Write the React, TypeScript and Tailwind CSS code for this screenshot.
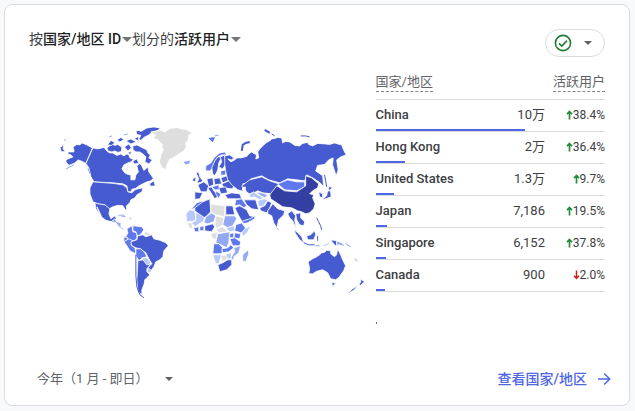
import React from 'react';

type Shape = {
  fill: string;
  d: string;
};

const countries = [
  { name: 'China', users: '10万', change: 38.4, share: 65 },
  { name: 'Hong Kong', users: '2万', change: 36.4, share: 13 },
  { name: 'United States', users: '1.3万', change: 9.7, share: 8 },
  { name: 'Japan', users: '7,186', change: 19.5, share: 5 },
  { name: 'Singapore', users: '6,152', change: 37.8, share: 4.5 },
  { name: 'Canada', users: '900', change: -2.0, share: 4 },
];

const NONE = '#dedede';
const LOW = '#b7c8fb';
const SOFT = '#92a8f2';
const MID = '#5f78ec';
const HIGH = '#465bcf';
const TOP = '#343fa3';

const regions: Shape[] = [
  // North America
  { fill: HIGH, d: 'M73 147L77 144.5L80 145L82 143L87 145L92.5 148L86 163.5L81 161L78 160L75 163L69 165.5L66 162L66 160L69 158.5L73 157L71 155L68 154L68 152L74 152L74 150Z' },
  { fill: HIGH, d: 'M60 147.5L64 145L63 149L65.500 151L61.500 152Z' },
  { fill: HIGH, d: 'M93 148L98 149L104 147.5L106 150L108 152L110 153L113 153L117 155.5L121 154L124 156L127 154L129 155L130 158L133.500 159.500L131 162L128 163L124 165L122 169L125 173L128 174.500L131 175L131 180L135 180L136 175L138.500 172L137 166L140 163.500L142 166L144 170.500L148 167L149 172L153.500 178.500L151 181L147 182L143 184L139 186L136 188.500L132 189.500L131 192L128 192L127 186L123 184L113 183L94 182L91 177L89 168L86 163.500Z' },
  { fill: HIGH, d: 'M93 182L113 183.500L123 185L127 188L128 192L132 193L135 190L138 189L143 188L142 192L137 195L135 198L131 200L130 203L126.500 206L127 210L125.500 210L123 206L119 205.500L116 206L113 207L109 209L105 205L98 204L93 202L90 194L90 188Z' },
  { fill: HIGH, d: 'M95 203L98 204L105 205L110 209L109 214L111 219L115 216L116.500 219L112 222L106 220.500L102 217.500L99 211L97 207L99.500 215L96 209Z' },
  { fill: HIGH, d: 'M136 131L139 130.500L141 131.500L147 128L154 127L160.500 128L158 130.500L152 132L149 135L144 137.500L141 140.500L139 139L141 135.500L137 134.500Z' },
  { fill: HIGH, d: 'M133 146L137 145L140 146.500L143 148L147 150L148 153L150.500 155L149 158L152.500 160L149 164L145 162L146 157L143 154L140 152L136 152L133 149.500Z' },
  { fill: HIGH, d: 'M107 148L112 144L115 145.500L118 144.500L122 147.500L121.500 151.500L118 152.500L115 151L112 152L108 151Z' },
  { fill: HIGH, d: 'M107.500 145L111 140.500L115 142.500L112 145.500Z' },
  { fill: HIGH, d: 'M117 140L121 137.500L124 139.500L120 142ZM126 141L131 139L136.500 142L131 144ZM134 139L138.500 136.500L139 141ZM124.500 147L129 144L131.500 148L128 151ZM133 161L137 159L139 163.500L134 164ZM128 152L132 152L130 155Z' },
  { fill: HIGH, d: 'M149.500 184L154 181L155.500 186L151 186.500Z' },
  { fill: SOFT, d: 'M111 222L115 219L117 222L121 223L121 227L125 230L123 230L119 227L116 223Z' },
  { fill: SOFT, d: 'M118 215L124 215L127 218L121 217ZM128 218L132 218L131 220Z' },
  { fill: NONE, d: 'M151 132L156 131.500L160 130L165 132L170 128.500L178 127.500L181 129L186 129.500L193 133L189 135L188.500 140L186 143L186.500 147L184 151L180 153.500L175 156.500L172 158.500L170 159L167 165L166 169.500L162 168L159.500 162L161 155L163.500 150L162 147L163 145L158 140L153 138L156 135.500Z' },
  { fill: SOFT, d: 'M183 162L186 161L190.500 160L190 164L186 165Z' },
  // South America
  { fill: MID, d: 'M127 229L132 226L133 232L137 233L137 239L134 241L130 241L126 237L128 233Z' },
  { fill: MID, d: 'M133 226L142 227L144 230L142 233L139 236L137 235L136 232L133 231Z' },
  { fill: NONE, d: 'M144 231L151 234L151 236L145 236Z' },
  { fill: MID, d: 'M124 237L128 238L127 241L124 242Z' },
  { fill: MID, d: 'M124 242L129 239L133 241L131 245L135 248L136 254L130 251L127 246Z' },
  { fill: HIGH, d: 'M131 242L137 240L138 236L143 235L146 237L152 235L154 239L160 240.500L166 243L168.500 246L164 251L163 257L160 260L156 262L154 267L151 271L148 268L152 264L149 259L146 253L140 249L136 248L132 246Z' },
  { fill: MID, d: 'M136 249L141 249L145 253L147 257L143 258L139 261L136 256Z' },
  { fill: LOW, d: 'M142 258L147 258L151 263L148 266L144 262Z' },
  { fill: LOW, d: 'M148 268L152 271L150 273L147 272Z' },
  { fill: HIGH, d: 'M138 261L143 260L147 265L151 264L147 269L147 272L150 275L147 278L145 280L144 285L142 290L142 295L138 292L137 280Z' },
  // Europe
  { fill: MID, d: 'M206 171L206 166L211 163L215 157L220 153L225 152L227 155L222 155L218 157L215 162L213 168L210 171Z' },
  { fill: HIGH, d: 'M213 174L212 168L215 161L218 157L222 157L219 163L218 170L215 176Z' },
  { fill: HIGH, d: 'M220.500 157L225 155L226 164L223 169L219 167L222 162Z' },
  { fill: HIGH, d: 'M196 172.500L199 172.500L200 177L203 181L201 182.500L197 183.500L199 179Z' },
  { fill: HIGH, d: 'M193 179L196 177L196 181L193 182Z' },
  { fill: HIGH, d: 'M198 185L204 182L209 186L207 192L201 192Z' },
  { fill: HIGH, d: 'M207 179L213 178L214 185L209 187Z' },
  { fill: HIGH, d: 'M214 179L220 178L222 184L215 185Z' },
  { fill: HIGH, d: 'M195 192L203 193L200 199L195 199.500Z' },
  { fill: HIGH, d: 'M208 188L212 187L214 191L218.500 196L215 199L210 191Z' },
  { fill: MID, d: 'M212 187L219 185L220 190L215 190ZM216 191L221 194L219 199L216 194Z' },
  { fill: HIGH, d: 'M222 184L229 181L236 185L232 189L224 188Z' },
  { fill: HIGH, d: 'M219 188L226 187L228 193L221 194Z' },
  { fill: HIGH, d: 'M221 178L227 176L230 180L223 183Z' },
  { fill: MID, d: 'M221 171L226 170L226 175L221 175.500Z' },
  { fill: MID, d: 'M208 138L212 137L216 137L213 143Z' },
  // Africa
  { fill: MID, d: 'M191 210L197 203L203 201L202 205L196 208Z' },
  { fill: HIGH, d: 'M195 208L203 202L210 199L211 212L206 217L203 218L195 211Z' },
  { fill: LOW, d: 'M186 214L190 210L195 211L196 221L187 222Z' },
  { fill: LOW, d: 'M196 212L205 218L203 222L199 224L196 227L191 223L196 221Z' },
  { fill: SOFT, d: 'M206 217L212 213L216 216L214 222L208 224L204 223Z' },
  { fill: NONE, d: 'M211 204L216 205L225 206L225 217L216 215L211 212Z' },
  { fill: NONE, d: 'M216 216L224 218L223 225L217 229L215 225Z' },
  { fill: HIGH, d: 'M226 206L233 206L235 215L226 215Z' },
  { fill: SOFT, d: 'M225 216L235 216L237 219L233 226L228 228L223 225Z' },
  { fill: LOW, d: 'M226 228L234 226L236 231L230 232Z' },
  { fill: MID, d: 'M236 225L242 223L247 230L241 233L235 231Z' },
  { fill: LOW, d: 'M245 229L251 226L248 232L243 237L242 233Z' },
  { fill: HIGH, d: 'M205 226L213 224L215 227L212 232L205 231Z' },
  { fill: MID, d: 'M194 228L199 227L199 232L195 232ZM200 227L204 226L204 231L200 231Z' },
  { fill: NONE, d: 'M187 223L192 223L193 228L190 229ZM216 229L223 227L228 232L219 233ZM211 234L218 232L216 240L212 238Z' },
  { fill: SOFT, d: 'M218 234L230 232L229 243L227 248L221 245L216 243Z' },
  { fill: MID, d: 'M214 244L219 244L223 248L222 254L213 254Z' },
  { fill: MID, d: 'M235 233L241 234L240 239L234 238ZM230 234L234 233L234 238L230 238Z' },
  { fill: MID, d: 'M230 239L235 238L241 242L240 246L233 246Z' },
  { fill: MID, d: 'M222 249L228 248L231 245L234 248L229 252L223 253Z' },
  { fill: SOFT, d: 'M234 248L241 246L239 253L234 257L234 261L231 258L235 252Z' },
  { fill: LOW, d: 'M213 255L222 255L219 264L216 264Z' },
  { fill: NONE, d: 'M221 256L227 255L228 259L222 262Z' },
  { fill: LOW, d: 'M226 254L232 253L231 259L228 259Z' },
  { fill: HIGH, d: 'M218 265L223 263L228 260L232 260L232 265L227 270L220 272Z' },
  { fill: SOFT, d: 'M243 255L248.500 250L249 254L246 262L243 261Z' },
  // Asia
  { fill: HIGH, d: 'M225 156L230 155L234 158L232 160L228 159L231 162L235 160L237 158L241 158L247 156.500L249 154L252 152L254 153.500L257 155L256 159L259 158L258 152L260 149L264 145L267 142.500L270 141L272 139L275 138.500L278 137.500L282 138L283 143L286 141.500L290 142L293 144L295 145.500L300 146L303 143.500L308 142.500L309 144.500L313 146L318 143.500L325 144L330 144.500L335 143L338 144L342 145L344 150L346.500 155L341 157L337 160L338.500 170L336.500 176L333 165L333.500 158L329 160L325 164.500L318 165.500L316 171L319 173L323 176L324 187L320.500 183L313 178L307 175L305 181L297 180L288 179L280 183L269 180L262 176L251 179L250 183L243 184L245 192L238 190L232 185L228 180L226 172L225 165Z' },
  { fill: HIGH, d: 'M242 186L250 180L262 177L270 181L279 184L276 188L272 194L263 193L258 191L252 195L246 192Z' },
  { fill: MID, d: 'M278 184L288 180L297 182L305 182L305 187L297 191L285 190Z' },
  { fill: TOP, d: 'M270 195L277 186L285 191L297 192L306 186L306 176L312 178L319 184L318 188L313 191L310 194L314 195L313 198L315.500 204L314 209L310 213L306 214L302 212L298 211L292 208L283 207L277 203L271 199Z' },
  { fill: HIGH, d: 'M225 195L232 193L240 194L242 199L228 199Z' },
  { fill: MID, d: 'M236 200L242 199L247 206L244 208L240 205L235 206Z' },
  { fill: HIGH, d: 'M235 208L240 206L247 210L250 216L256 217L252 221L243 223L239 216Z' },
  { fill: MID, d: 'M243 221L250 219L255 216L255 219L248 223L243 224Z' },
  { fill: HIGH, d: 'M244 200L250 200L256 200L259 210L252 209L247 205Z' },
  { fill: LOW, d: 'M250 194L254 192L260 196L264 198L260 200L255 197L250 198Z' },
  { fill: SOFT, d: 'M256 192L262 193L268 195L265 198L261 196Z' },
  { fill: LOW, d: 'M258 201L264 199L268 200L264 206L259 207Z' },
  { fill: HIGH, d: 'M260 208L265 206L268 201L272 203L270 208L267 213L261 211Z' },
  { fill: HIGH, d: 'M268 211L273 204L278 209L285 211L284 215L279 220L277 228L274 223L272 216L268 214Z' },
  { fill: HIGH, d: 'M288 214L292 211L296 216L295 220L296.500 229L293 221L290 218Z' },
  { fill: HIGH, d: 'M296 214L301 213L301 218L305 222L304 226L300 225L297 220Z' },
  { fill: HIGH, d: 'M294 230L297 232L302 237L304 243L300 240L296 234Z' },
  { fill: HIGH, d: 'M307 236L311 235L315 231L316 235L314 240L308 240Z' },
  { fill: HIGH, d: 'M331 240L337 241L337 247L334 244Z' },
  { fill: SOFT, d: 'M337 241L342 243L346 247L339 245L337 246Z' },
  { fill: HIGH, d: 'M319 192L323 194L323 198L320 197Z' },
  { fill: HIGH, d: 'M329 186.500L333 188L329 191ZM328 191L331 191L331.500 197L326 199L322 200.500L327 196Z' },
  // Oceania
  { fill: HIGH, d: 'M308.500 262L313 259L317 257L320 255L322 253L325 252.500L327 250.500L331 251L331 254L335 257L337 255L338 249L341 255L343 260L346 266L344 271L339 278L336 280L331 279L328 273L323 270L317 271.500L313 274L309 274L310 269Z' },
  { fill: HIGH, d: 'M332 283L336 283L333 287Z' },
  { fill: HIGH, d: 'M349 293L353 289L359 285.500L354 290.500L350 293ZM359 284.500L361 283L361 279.500L365 282L361 285.500Z' },
];

// islands and coast strips that are too thin for an outline
const strips: { stroke: string; width: number; d: string }[] = [
  { stroke: HIGH, width: 1, d: 'M136 255L136 264L136 276L137 287L140 295L144 298' },
  { stroke: HIGH, width: 2, d: 'M242 151L243 145L246 143L250 142' },
  { stroke: HIGH, width: 2, d: 'M265 130L270 133' },
  { stroke: HIGH, width: 1, d: 'M301 136L306 136L310 137M272 134L275 136' },
  { stroke: HIGH, width: 1, d: 'M325 175L326 181L327 187' },
  { stroke: HIGH, width: 1, d: 'M304 243L309 245L315 245M318 236L318 241M317 218L319 222L321 226L322 230' },
  { stroke: SOFT, width: 1, d: 'M66 169L70 167L74 165M88 168L90 174M346 244L351 247M355 259L358 261M277 228L279 230' },
  { stroke: SOFT, width: 1, d: 'M64 141L66 139M109 137L112 136M124 135L128 134M215 136L219 135M316 246L320 246' },
  { stroke: LOW, width: 1, d: 'M118 216L123 215L126 217M324 246L329 244' },
];

const WorldMap: React.FC = () => (
  <svg viewBox="29 73 346 256" className="block w-full" role="img" aria-label="活跃用户世界地图">
    <g stroke="#fff" strokeWidth="0.8" strokeLinejoin="round">
      {regions.map((region) => (
        <path key={region.d} d={region.d} fill={region.fill} />
      ))}
    </g>
    <g fill="none">
      {strips.map((strip) => (
        <path key={strip.d} d={strip.d} stroke={strip.stroke} strokeWidth={strip.width} />
      ))}
    </g>
    {/* inland water */}
    <g fill="#fff">
      <path d="M243 187L246 187L246 190L249 195L248 199L245 197L245 193L242 190Z" />
      <path d="M228 189L234 190L239 192L234 193L228 193Z" />
    </g>
  </svg>
);

const Caret: React.FC = () => (
  <svg viewBox="0 0 10 5" className="ml-px h-[5px] w-[10px] shrink-0" fill="#757575" aria-hidden="true">
    <path d="M0 0h10L5 5z" />
  </svg>
);

const SmallCaret: React.FC = () => (
  <svg viewBox="0 0 8 4" className="h-1 w-2 shrink-0" fill="#5f6368" aria-hidden="true">
    <path d="M0 0h8L4 4z" />
  </svg>
);

const ChangeArrow: React.FC<{ up: boolean }> = ({ up }) => (
  <svg viewBox="0 0 7 10" className="h-[10px] w-[7px]" fill="none" stroke={up ? '#1e8e3e' : '#c5221f'} aria-hidden="true">
    {up ? (
      <path d="M3.5 9.500V1.500M1 4.200L3.500 1.500L6 4.200" strokeWidth="1.700" />
    ) : (
      <path d="M3.500 0.500V8.500M1 5.800L3.500 8.500L6 5.800" strokeWidth="1.500" />
    )}
  </svg>
);

export default function App() {
  return (
    <div className="flex min-h-screen flex-col bg-[#f8f9fb] px-[4px] pt-1 pb-[5px] font-['Roboto','Noto_Sans_CJK_SC',sans-serif] text-[#3c4043]">
      <section className="mr-px flex flex-1 flex-col rounded-lg border border-[#dadce0] bg-white">
        <header className="flex items-start justify-between px-6 pt-6">
          <h2 className="flex h-5 items-center text-[14px] leading-5 whitespace-pre">
            <span>按</span>
            <button type="button" className="flex items-center font-medium text-[#202124]">
              国家/地区 ID
              <Caret />
            </button>
            <span>划分的</span>
            <button type="button" className="flex items-center font-medium text-[#202124]">
              活跃用户
              <Caret />
            </button>
          </h2>
          <button
            type="button"
            aria-label="数据质量"
            className="flex h-7 w-[60px] items-center justify-between rounded-full border border-[#dadce0] pr-3 pl-2"
          >
            <svg viewBox="0 0 18 18" className="h-[18px] w-[18px]" fill="none" stroke="#1e7e34" aria-hidden="true">
              <circle cx="9" cy="9" r="7.6" strokeWidth="1.6" />
              <path d="M5 9.3L7.8 12L13 6.6" strokeWidth="1.6" />
            </svg>
            <SmallCaret />
          </button>
        </header>

        <div className="mt-4 grid grid-cols-5 px-6">
          <div className="col-span-3">
            <WorldMap />
          </div>
          <div className="col-span-2 pl-px">
            <table className="w-full border-collapse">
              <thead>
                <tr className="h-[26px] border-b border-[#dadce0] text-[13px] leading-[18px] text-[#5f6368]">
                  <th scope="col" className="p-0 pb-[6px] text-left font-normal">
                    <span className="block w-fit border-b border-dashed border-[#80868b]">国家/地区</span>
                  </th>
                  <th scope="col" colSpan={2} className="p-0 pb-[6px] text-right font-normal">
                    <span className="ml-auto block w-fit border-b border-dashed border-[#80868b]">活跃用户</span>
                  </th>
                </tr>
              </thead>
              <tbody>
                {countries.map((country) => (
                  <tr key={country.name} className="relative h-8 border-b border-[#dadce0] leading-4">
                    <td className="p-0 text-[13px] font-medium">
                      {country.name}
                      <div className="absolute -bottom-px left-0 h-[2px] bg-[#4f66e5]" style={{ width: `${country.share}%` }} />
                    </td>
                    <td className="p-0 text-right text-[13px]">{country.users}</td>
                    <td className="w-[60px] p-0 text-[12px]">
                      <span className="flex items-center justify-end">
                        <ChangeArrow up={country.change > 0} />
                        {Math.abs(country.change).toFixed(1)}%
                      </span>
                    </td>
                  </tr>
                ))}
                <tr className="relative h-8">
                  <td colSpan={3} className="p-0">
                    <div className="absolute -bottom-px left-0 h-[2px] w-px bg-[#4f66e5]" />
                  </td>
                </tr>
              </tbody>
            </table>
          </div>
        </div>

        <footer className="mt-auto flex h-[52px] items-center justify-between pr-[18px] pl-8">
          <label className="flex items-center gap-4 text-[13px] text-[#5f6368]">
            <select aria-label="日期范围" className="appearance-none bg-transparent leading-5">
              <option>今年（1 月 - 即日）</option>
            </select>
            <SmallCaret />
          </label>
          <a href="#" className="flex items-center gap-[10px] text-[14px] leading-5 font-medium text-[#4f66e5]">
            查看国家/地区
            <svg viewBox="0 0 14 14" className="h-[14px] w-[14px]" fill="none" stroke="currentColor" strokeWidth="1.5" aria-hidden="true">
              <path d="M1 7H12.5M7.2 1.5L12.7 7L7.2 12.5" />
            </svg>
          </a>
        </footer>
      </section>
    </div>
  );
}
